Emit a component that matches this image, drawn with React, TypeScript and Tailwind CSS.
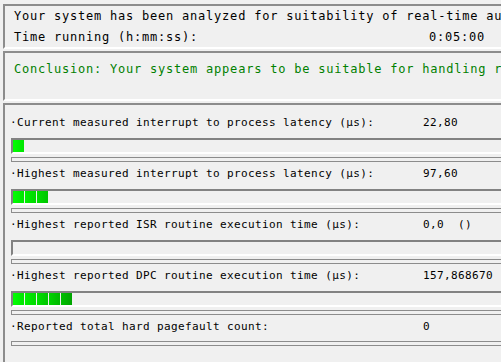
import React from "react";

const mono = "font-['DejaVu_Sans_Mono','Liberation_Mono',monospace] text-[12px] tracking-[0.78px]";

const segColors = [
  "from-[#00ff00] to-[#00e400]",
  "from-[#00f000] to-[#00d800]",
  "from-[#00e000] to-[#00c400]",
  "from-[#00d400] to-[#00b800]",
  "from-[#00c000] to-[#00a400]",
];

const rows = [
  { label: "Current measured interrupt to process latency (µs):", value: "22,80", segs: 1, bar: true },
  { label: "Highest measured interrupt to process latency (µs):", value: "97,60", segs: 3, bar: true },
  { label: "Highest reported ISR routine execution time (µs):", value: "0,0  ()", segs: 0, bar: true },
  { label: "Highest reported DPC routine execution time (µs):", value: "157,868670", segs: 5, bar: true },
  { label: "Reported total hard pagefault count:", value: "0", segs: 0, bar: false },
];

const Panel = ({ className, children }: { className?: string; children: React.ReactNode }) => (
  <div
    className={`w-[540px] border-t-2 border-l-2 border-b-2 border-t-[#8c8c8c] border-l-[#8c8c8c] border-b-white ${className ?? ""}`}>
    {children}
  </div>
);

const Bar = ({ segs }: { segs: number }) => (
  <div className="mt-[5px] ml-[6px] h-[16px] w-[520px] border-t-2 border-l-2 border-b-2 border-t-[#828282] border-l-[#828282] border-b-white bg-[#f0f0f0]">
    <div className="flex gap-[1px] h-[12px]">
      {Array.from({ length: segs }).map((_, i) => (
        <div key={i} className={`w-[11px] h-full bg-gradient-to-r ${segColors[i]}`} />
      ))}
    </div>
  </div>
);

const Sep = ({ className }: { className?: string }) => (
  <div
    className={`ml-[6px] h-[5px] w-[520px] border-t border-l border-b border-[#8c8c8c] bg-[#f0f0f0] ${className ?? ""}`}
  />
);

export default function App() {
  return (
    <div className={`w-[501px] h-[362px] overflow-hidden bg-[#f0f0f0] pt-[4px] pl-[3px] text-black ${mono}`}>
      <Panel className="h-[45px]">
        <div className="pl-[9px] leading-[21px]">
          <div className="whitespace-nowrap">
            Your system has been analyzed for suitability of real-time audio and other tasks without dropouts.
          </div>
          <div className="flex whitespace-nowrap">
            <span className="w-[415px]">Time running (h:mm:ss):</span>
            <span>0:05:00</span>
          </div>
        </div>
      </Panel>
      <Panel className="mt-[2px] h-[50px]">
        <div className="pl-[9px] pt-[6px] leading-[20px] text-[#008000] whitespace-nowrap">
          Conclusion: Your system appears to be suitable for handling real-time audio and other tasks without dropouts.
        </div>
      </Panel>
      <Panel className="mt-[2px] h-[300px]">
        <div className="pt-[8px] text-[11px] tracking-[0.38px]">
          {rows.map((r, i) => (
            <div key={i} className={i > 0 ? "mt-[2px]" : ""}>
              <div className="flex h-[20px] items-center whitespace-nowrap pl-[5px]">
                <span className="w-[413px]">·{r.label}</span>
                <span className="whitespace-pre">{r.value}</span>
              </div>
              {r.bar ? (
                <>
                  <Bar segs={r.segs} />
                  <Sep className="mt-[3px]" />
                </>
              ) : (
                <Sep className="mt-[4px]" />
              )}
            </div>
          ))}
        </div>
      </Panel>
    </div>
  );
}
